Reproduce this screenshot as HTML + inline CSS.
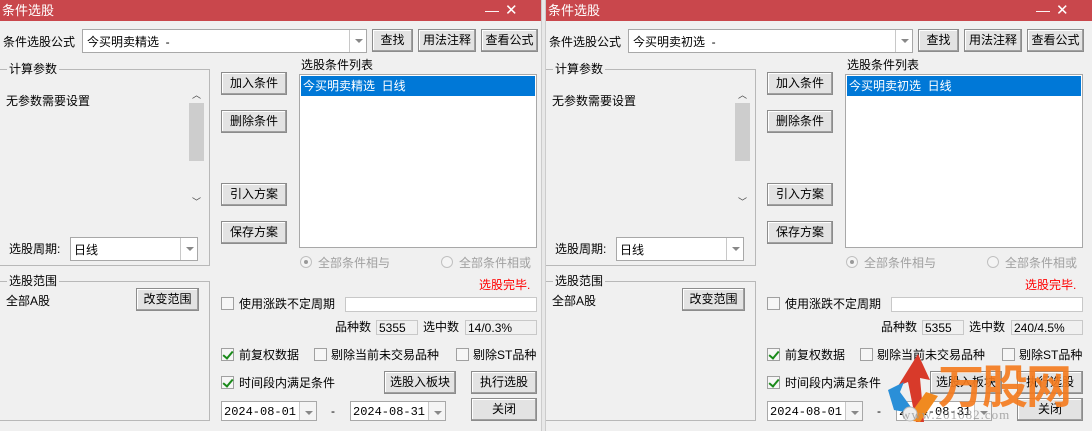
<!DOCTYPE html><html><head><meta charset="utf-8"><style>
*{box-sizing:border-box;margin:0;padding:0}
body{width:1092px;height:431px;overflow:hidden;background:#e6e6e6;font-family:"Liberation Sans","Noto Sans CJK SC",sans-serif;font-size:12px;color:#000;position:relative}
.p{position:absolute;top:0;height:431px;background:#f0f0f0;overflow:hidden}
.a{position:absolute;white-space:nowrap;line-height:14px}
.tb{position:absolute;left:0;top:0;right:0;height:21px;background:#c9474c;color:#fff;font-size:13px;line-height:21px;padding-left:2px}
.btn{position:absolute;background:#e3e3e3;border:1px solid #8c8c8c;box-shadow:inset -1px -1px 0 #a0a0a0,inset 1px 1px 0 #fff;text-align:center;line-height:20px}
.box{position:absolute;background:#fff;border:1px solid #a8a8a8}
.dd{position:absolute;top:0;bottom:0;right:0;width:17px;border-left:1px solid #c8c8c8;background:#fff}
.dd:after{content:"";position:absolute;left:5px;top:9px;border-left:4px solid transparent;border-right:4px solid transparent;border-top:4px solid #888}
.grp{position:absolute;border:1px solid #b8b8b8;border-left:none}
.gl{position:absolute;background:#f0f0f0;padding:0 2px;line-height:14px}
.cb{position:absolute;width:13px;height:13px;border:1px solid #a0a0a0;background:#f6f6f6}
.cb.on:after{content:"";position:absolute;left:3px;top:0px;width:4px;height:8px;border-right:2px solid #1a8a1a;border-bottom:2px solid #1a8a1a;transform:rotate(40deg)}
.ro{position:absolute;width:12px;height:12px;border-radius:50%;border:1px solid #c0c0c0;background:#f4f4f4}
.ro.on:after{content:"";position:absolute;left:3px;top:3px;width:4px;height:4px;border-radius:50%;background:#999}
.gray{color:#a0a0a0}
.ro2{position:absolute;background:#f0f0f0;border:1px solid #c8c8c8;line-height:14px;padding-left:2px}
</style></head><body>
<div style="position:absolute;left:541px;top:0;width:5px;height:431px;background:#e8e8e8;border-left:1px solid #ccc;border-right:1px solid #ccc"></div>

<!-- LEFT PANEL -->
<div class="p" style="left:0;width:541px">
<div class="tb">条件选股<span style="position:absolute;left:485px;top:0;font-size:14px">—</span><span style="position:absolute;left:505px;top:0;font-size:15px">✕</span></div>
<div class="a" style="left:3px;top:35px">条件选股公式</div>
<div class="box" style="left:82px;top:29px;width:285px;height:24px"><span class="a" style="left:4px;top:5px">今买明卖精选&nbsp;&nbsp;-</span><div class="dd"></div></div>
<div class="btn" style="left:372px;top:29px;width:41px;height:23px">查找</div>
<div class="btn" style="left:418px;top:29px;width:58px;height:23px">用法注释</div>
<div class="btn" style="left:481px;top:29px;width:57px;height:23px">查看公式</div>
<div class="grp" style="left:0;top:69px;width:210px;height:197px"></div>
<div class="gl" style="left:7px;top:62px">计算参数</div>
<div class="a" style="left:6px;top:94px">无参数需要设置</div>
<div style="position:absolute;left:189px;top:87px;width:15px;height:123px;background:#f0f0f0"><div style="position:absolute;left:0;top:16px;width:15px;height:58px;background:#cdcdcd"></div><span class="a" style="left:3px;top:1px;font-size:9px;color:#444">︿</span><span class="a" style="left:3px;top:108px;font-size:9px;color:#444">﹀</span></div>
<div class="a" style="left:9px;top:242px">选股周期:</div>
<div class="box" style="left:70px;top:237px;width:128px;height:24px"><span class="a" style="left:3px;top:5px">日线</span><div class="dd"></div></div>
<div class="btn" style="left:221px;top:72px;width:66px;height:23px">加入条件</div>
<div class="btn" style="left:221px;top:110px;width:66px;height:23px">删除条件</div>
<div class="btn" style="left:221px;top:183px;width:66px;height:23px">引入方案</div>
<div class="btn" style="left:221px;top:221px;width:66px;height:23px">保存方案</div>
<div class="a" style="left:301px;top:58px">选股条件列表</div>
<div class="box" style="left:299px;top:74px;width:238px;height:174px"><div style="position:absolute;left:1px;top:1px;width:234px;height:20px;background:#0078d7;color:#fff;line-height:20px;padding-left:2px">今买明卖精选&nbsp;&nbsp;日线</div></div>
<div class="ro on" style="left:300px;top:256px"></div><div class="a gray" style="left:318px;top:256px">全部条件相与</div>
<div class="ro" style="left:441px;top:256px"></div><div class="a gray" style="left:459px;top:256px">全部条件相或</div>
<div class="grp" style="left:0;top:281px;width:210px;height:140px"></div>
<div class="gl" style="left:7px;top:274px">选股范围</div>
<div class="a" style="left:6px;top:294px">全部A股</div>
<div class="btn" style="left:136px;top:288px;width:63px;height:23px">改变范围</div>
<div class="a" style="left:479px;top:278px;color:#f00">选股完毕.</div>
<div class="cb" style="left:221px;top:297px"></div><div class="a" style="left:239px;top:297px">使用涨跌不定周期</div>
<div class="box" style="left:345px;top:297px;width:192px;height:15px;border-color:#c8c8c8"></div>
<div class="a" style="left:335px;top:320px">品种数</div>
<div class="ro2" style="left:376px;top:320px;width:42px;height:15px">5355</div>
<div class="a" style="left:423px;top:320px">选中数</div>
<div class="ro2" style="left:465px;top:320px;width:72px;height:15px">14/0.3%</div>
<div class="cb on" style="left:221px;top:348px"></div><div class="a" style="left:239px;top:348px">前复权数据</div>
<div class="cb" style="left:314px;top:348px"></div><div class="a" style="left:331px;top:348px">剔除当前未交易品种</div>
<div class="cb" style="left:456px;top:348px"></div><div class="a" style="left:473px;top:348px">剔除ST品种</div>
<div class="cb on" style="left:221px;top:376px"></div><div class="a" style="left:239px;top:376px">时间段内满足条件</div>
<div class="btn" style="left:384px;top:371px;width:72px;height:23px">选股入板块</div>
<div class="btn" style="left:471px;top:371px;width:66px;height:23px">执行选股</div>
<div class="box" style="left:221px;top:401px;width:96px;height:20px"><span class="a" style="left:2px;top:3px;font-family:'Liberation Mono',monospace">2024-08-01</span><div class="dd" style="background:#f4f4f4"></div></div>
<div class="a" style="left:331px;top:404px">-</div>
<div class="box" style="left:350px;top:401px;width:96px;height:20px"><span class="a" style="left:2px;top:3px;font-family:'Liberation Mono',monospace">2024-08-31</span><div class="dd" style="background:#f4f4f4"></div></div>
<div class="btn" style="left:471px;top:398px;width:66px;height:23px">关闭</div>
</div>

<!-- RIGHT PANEL -->
<div class="p" style="left:546px;width:546px">
<div class="tb">条件选股<span style="position:absolute;left:490px;top:0;font-size:14px">—</span><span style="position:absolute;left:510px;top:0;font-size:15px">✕</span></div>
<div class="a" style="left:3px;top:35px">条件选股公式</div>
<div class="box" style="left:82px;top:29px;width:285px;height:24px"><span class="a" style="left:4px;top:5px">今买明卖初选&nbsp;&nbsp;-</span><div class="dd"></div></div>
<div class="btn" style="left:372px;top:29px;width:41px;height:23px">查找</div>
<div class="btn" style="left:418px;top:29px;width:58px;height:23px">用法注释</div>
<div class="btn" style="left:481px;top:29px;width:57px;height:23px">查看公式</div>
<div class="grp" style="left:0;top:69px;width:210px;height:197px"></div>
<div class="gl" style="left:7px;top:62px">计算参数</div>
<div class="a" style="left:6px;top:94px">无参数需要设置</div>
<div style="position:absolute;left:189px;top:87px;width:15px;height:123px;background:#f0f0f0"><div style="position:absolute;left:0;top:16px;width:15px;height:58px;background:#cdcdcd"></div><span class="a" style="left:3px;top:1px;font-size:9px;color:#444">︿</span><span class="a" style="left:3px;top:108px;font-size:9px;color:#444">﹀</span></div>
<div class="a" style="left:9px;top:242px">选股周期:</div>
<div class="box" style="left:70px;top:237px;width:128px;height:24px"><span class="a" style="left:3px;top:5px">日线</span><div class="dd"></div></div>
<div class="btn" style="left:221px;top:72px;width:66px;height:23px">加入条件</div>
<div class="btn" style="left:221px;top:110px;width:66px;height:23px">删除条件</div>
<div class="btn" style="left:221px;top:183px;width:66px;height:23px">引入方案</div>
<div class="btn" style="left:221px;top:221px;width:66px;height:23px">保存方案</div>
<div class="a" style="left:301px;top:58px">选股条件列表</div>
<div class="box" style="left:299px;top:74px;width:238px;height:174px"><div style="position:absolute;left:1px;top:1px;width:234px;height:20px;background:#0078d7;color:#fff;line-height:20px;padding-left:2px">今买明卖初选&nbsp;&nbsp;日线</div></div>
<div class="ro on" style="left:300px;top:256px"></div><div class="a gray" style="left:318px;top:256px">全部条件相与</div>
<div class="ro" style="left:441px;top:256px"></div><div class="a gray" style="left:459px;top:256px">全部条件相或</div>
<div class="grp" style="left:0;top:281px;width:210px;height:140px"></div>
<div class="gl" style="left:7px;top:274px">选股范围</div>
<div class="a" style="left:6px;top:294px">全部A股</div>
<div class="btn" style="left:136px;top:288px;width:63px;height:23px">改变范围</div>
<div class="a" style="left:479px;top:278px;color:#f00">选股完毕.</div>
<div class="cb" style="left:221px;top:297px"></div><div class="a" style="left:239px;top:297px">使用涨跌不定周期</div>
<div class="box" style="left:345px;top:297px;width:192px;height:15px;border-color:#c8c8c8"></div>
<div class="a" style="left:335px;top:320px">品种数</div>
<div class="ro2" style="left:376px;top:320px;width:42px;height:15px">5355</div>
<div class="a" style="left:423px;top:320px">选中数</div>
<div class="ro2" style="left:465px;top:320px;width:72px;height:15px">240/4.5%</div>
<div class="cb on" style="left:221px;top:348px"></div><div class="a" style="left:239px;top:348px">前复权数据</div>
<div class="cb" style="left:314px;top:348px"></div><div class="a" style="left:331px;top:348px">剔除当前未交易品种</div>
<div class="cb" style="left:456px;top:348px"></div><div class="a" style="left:473px;top:348px">剔除ST品种</div>
<div class="cb on" style="left:221px;top:376px"></div><div class="a" style="left:239px;top:376px">时间段内满足条件</div>
<div class="btn" style="left:384px;top:371px;width:72px;height:23px">选股入板块</div>
<div class="btn" style="left:471px;top:371px;width:66px;height:23px">执行选股</div>
<div class="box" style="left:221px;top:401px;width:96px;height:20px"><span class="a" style="left:2px;top:3px;font-family:'Liberation Mono',monospace">2024-08-01</span><div class="dd" style="background:#f4f4f4"></div></div>
<div class="a" style="left:331px;top:404px">-</div>
<div class="box" style="left:350px;top:401px;width:96px;height:20px"><span class="a" style="left:2px;top:3px;font-family:'Liberation Mono',monospace">2024-08-31</span><div class="dd" style="background:#f4f4f4"></div></div>
<div class="btn" style="left:471px;top:398px;width:66px;height:23px">关闭</div>
<!-- logo -->
<svg style="position:absolute;left:340px;top:352px" width="60" height="75" viewBox="0 0 60 75"><path d="M30 70 L22 30 L12 34 L32 2 L44 28 L34 26 L38 70Z" fill="#d83a2a"/><path d="M8 58 L2 38 L18 30 L14 40 L30 62Z" fill="#2a8fd8"/><path d="M20 68 L40 40 L52 44 L34 70Z" fill="#f08a20"/><circle cx="24" cy="62" r="7" fill="#eee" stroke="#bbb"/></svg>
<div class="a" style="left:392px;top:362px;font-size:46px;line-height:50px;font-weight:bold;color:#f57c20;letter-spacing:-2px;opacity:.92">万股网</div>
<div class="a" style="left:355px;top:408px;font-size:13px;color:#999;font-family:'Liberation Serif',serif;letter-spacing:1px;opacity:.8">www.201082.com</div>
</div>
</body></html>
